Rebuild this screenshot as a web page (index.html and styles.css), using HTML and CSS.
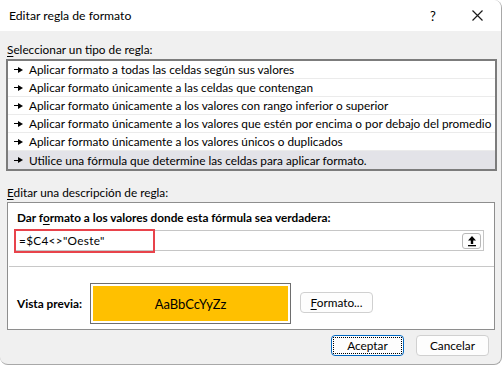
FILE: index.html
```html
<!DOCTYPE html>
<html lang="es">
<head>
    <meta charset="UTF-8">
    <title>Editar regla de formato</title>
    <link rel="stylesheet" href="styles.css">
</head>
<body>
    <div class="window">
        <div class="titlebar">
            <span class="title">Editar regla de formato</span>
            <span class="help">?</span>
            <span class="close">
                <svg width="11" height="11" viewBox="0 0 11 11"><path d="M0.5 0.5 L10.5 10.5 M10.5 0.5 L0.5 10.5" stroke="#1a1a1a" stroke-width="1.2"/></svg>
            </span>
        </div>

        <div class="content">
            <div class="label"><u>S</u>eleccionar un tipo de regla:</div>
            <ul class="rule-list">
                <li><span class="arrow"></span>Aplicar formato a todas las celdas según sus valores</li>
                <li><span class="arrow"></span>Aplicar formato únicamente a las celdas que contengan</li>
                <li><span class="arrow"></span>Aplicar formato únicamente a los valores con rango inferior o superior</li>
                <li><span class="arrow"></span>Aplicar formato únicamente a los valores que estén por encima o por debajo del promedio</li>
                <li><span class="arrow"></span>Aplicar formato únicamente a los valores únicos o duplicados</li>
                <li class="selected"><span class="arrow"></span>Utilice una fórmula que determine las celdas para aplicar formato.</li>
            </ul>

            <div class="label label-desc"><u>E</u>ditar una descripción de regla:</div>
            <div class="desc">
                <div class="desc-title">Dar f<u>o</u>rmato a los valores donde esta fórmula sea verdadera:</div>
                <div class="formula">
                    <span class="formula-text">=$C4&lt;&gt;"Oeste"</span>
                    <span class="collapse">
                        <svg width="12" height="12" viewBox="0 0 12 12"><path d="M6 1 L10 5.5 L7.2 5.5 L7.2 9 L4.8 9 L4.8 5.5 L2 5.5 Z" fill="#000"/><rect x="2" y="10" width="8" height="1.3" fill="#000"/></svg>
                    </span>
                    <span class="highlight"></span>
                </div>
                <div class="divider"></div>
                <div class="preview-row">
                    <span class="preview-label">Vista previa:</span>
                    <div class="preview"><div class="sample">AaBbCcYyZz</div></div>
                    <button class="btn btn-format"><u>F</u>ormato...</button>
                </div>
            </div>

            <div class="footer">
                <button class="btn btn-default"><span class="focus">Aceptar</span></button>
                <button class="btn">Cancelar</button>
            </div>
        </div>
    </div>
</body>
</html>
```

FILE: styles.css
```css
* {
    box-sizing: border-box;
}

body {
    margin: 0;
    width: 503px;
    height: 366px;
    overflow: hidden;
    background: #fff;
    font-family: 'Lato', 'Liberation Sans', sans-serif;
    font-size: 11.8px;
    color: #000;
}

.window {
    width: 502px;
    height: 365px;
    background: #f0f0f0;
    border: 1px solid #a8a8a8;
    border-left: none;
    border-top: none;
    border-radius: 0 8px 8px 8px;
    overflow: hidden;
}

.titlebar {
    display: flex;
    align-items: center;
    height: 31px;
    padding-left: 9px;
    background: #fff;
}
.title {
    flex: 1;
    font-size: 12.2px;
    padding-bottom: 1px;
}
.help {
    width: 14px;
    margin-right: 28px;
    font-size: 13px;
}
.close {
    display: flex;
    margin-right: 18px;
}

.content {
    padding: 0 4px 0 7px;
}

.label {
    height: 28px;
    padding-top: 11px;
    line-height: 16px;
}
.label u,
.desc-title u,
.btn u {
    text-underline-offset: 2px;
}
.label-desc {
    height: 31px;
    padding-top: 14px;
}

.rule-list {
    list-style: none;
    margin: 0 0 0 -1px;
    padding: 0;
    width: 491px;
    background: #fff;
    border: 2px solid #7c7c7c;
}
.rule-list li {
    display: flex;
    align-items: center;
    height: 18px;
    padding-left: 6px;
    border-bottom: 1px solid #ebebeb;
    white-space: nowrap;
}
.rule-list li:last-child {
    border-bottom: none;
}
.rule-list li.selected {
    background: #e3e3e8;
}
.arrow {
    position: relative;
    flex-shrink: 0;
    width: 9px;
    height: 6px;
    margin-right: 6px;
}
.arrow::before {
    content: "";
    position: absolute;
    left: 0;
    top: 2.5px;
    width: 5px;
    height: 1.2px;
    background: #000;
}
.arrow::after {
    content: "";
    position: absolute;
    left: 4px;
    top: 0;
    border-left: 5px solid #000;
    border-top: 3px solid transparent;
    border-bottom: 3px solid transparent;
}

.desc {
    width: 488px;
    height: 128px;
    background: #fff;
    border: 1px solid #8e8e8e;
}
.desc-title {
    padding: 7px 0 0 9px;
    height: 27px;
    font-weight: bold;
}

.formula {
    position: relative;
    display: flex;
    align-items: center;
    justify-content: space-between;
    width: 469px;
    height: 21px;
    margin-left: 7px;
    padding: 0 2px 0 3px;
    border: 1px solid #c6c6c6;
}
.formula-text {
    letter-spacing: 0.3px;
}
.collapse {
    display: flex;
    align-items: center;
    justify-content: center;
    width: 19px;
    height: 16px;
    background: #fdfdfd;
    border: 1px solid #b8b8b8;
    border-radius: 3px;
}
.highlight {
    position: absolute;
    left: -2px;
    top: -2px;
    width: 141px;
    height: 24px;
    border: 2px solid #e8434b;
}

.divider {
    height: 1px;
    margin: 15px 0 0 1px;
    background: #c8c8c8;
}

.preview-row {
    display: flex;
    align-items: center;
    margin-top: 16px;
}
.preview-label {
    width: 82px;
    padding-left: 9px;
    font-weight: bold;
}
.preview {
    width: 201px;
    height: 41px;
    padding: 2px;
    background: #fff;
    border: 1px solid #6e6e6e;
}
.sample {
    display: flex;
    align-items: center;
    justify-content: center;
    height: 100%;
    background: #ffc000;
    font-size: 13px;
}

.btn {
    width: 73px;
    height: 21px;
    padding: 0;
    font-family: inherit;
    font-size: 11.8px;
    color: #000;
    background: #fdfdfd;
    border: 1px solid #d0d0d0;
    border-radius: 4px;
}
.btn-format {
    margin-left: 9px;
    margin-top: -2px;
}

.footer {
    display: flex;
    justify-content: flex-end;
    gap: 12px;
    padding: 5px 8px 0 0;
}
.btn-default {
    border-color: #0067c0;
    padding: 1px;
}
.focus {
    display: block;
    height: 100%;
    line-height: 15px;
    border: 1px dotted #000;
}
```
